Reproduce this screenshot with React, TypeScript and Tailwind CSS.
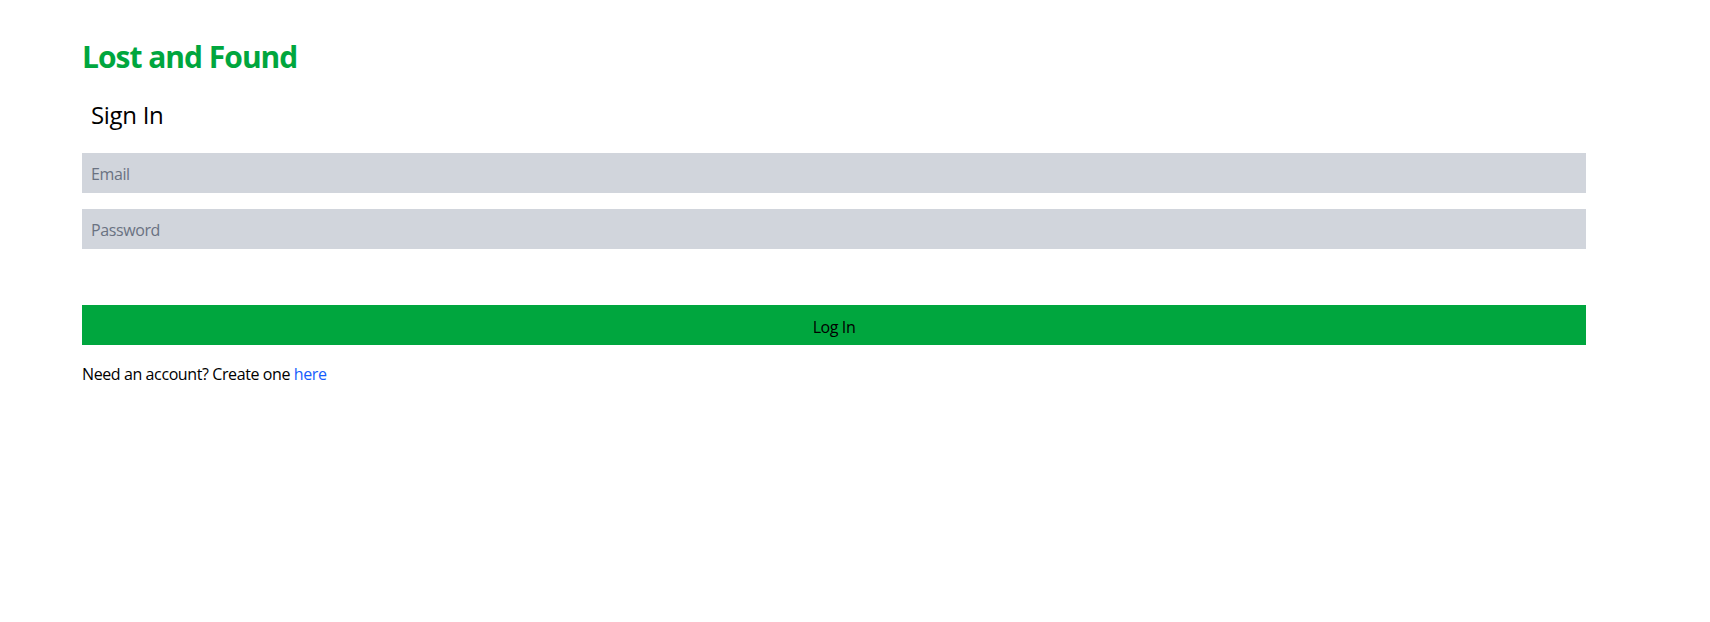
export default function App() {
  return (
    <div className="min-h-screen bg-white font-['Open_Sans',sans-serif] text-black">
      <div className="ml-[82px] w-[1504px] pt-[39px]">
        <h1 className="text-[30px] font-bold leading-9 tracking-[-1px] text-green-600">Lost and Found</h1>
        <h2 className="mt-[24px] pl-[9px] text-[24px] leading-8 tracking-[-0.3px]">Sign In</h2>
        <form className="mt-[22px] flex flex-col" onSubmit={(e) => e.preventDefault()}>
          <input
            type="email"
            placeholder="Email"
            className="h-10 w-full bg-gray-300 px-[9px] pt-[2px] text-base tracking-[-0.4px] text-black placeholder:text-gray-500 outline-none"
          />
          <input
            type="password"
            placeholder="Password"
            className="mt-4 h-10 w-full bg-gray-300 px-[9px] pt-[2px] text-base tracking-[-0.4px] text-black placeholder:text-gray-500 outline-none"
          />
          <button type="submit" className="mt-14 h-10 w-full bg-green-600 pt-[3px] text-base tracking-[-0.4px] text-black">
            Log In
          </button>
        </form>
        <p className="mt-[17px] text-base tracking-[-0.4px]">
          Need an account? Create one{" "}
          <a href="#" className="text-blue-600">
            here
          </a>
        </p>
      </div>
    </div>
  );
}
